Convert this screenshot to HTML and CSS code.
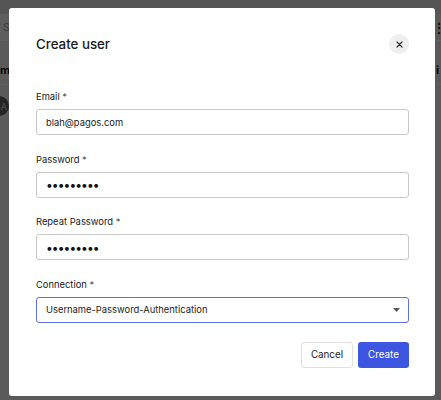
FILE: index.html
```html
<!DOCTYPE html>
<html lang="en">
<head>
<meta charset="utf-8">
<title>Create user</title>
<link rel="stylesheet" href="styles.css">
</head>
<body>
<div class="app">
  <div class="topbar"></div>
  <div class="toolbar">
    <div class="search">Search users</div>
    <div class="tool">⋮</div>
  </div>
  <div class="thead"><span class="th">m</span><span class="th-r">i</span></div>
  <div class="trow"><span class="avatar">SA</span></div>
</div>
<div class="overlay">
  <div class="modal" role="dialog" aria-labelledby="dlg-title">
    <div class="modal-head">
      <h2 id="dlg-title">Create user</h2>
      <button class="close" type="button" aria-label="Close">
        <svg width="7" height="7" viewBox="0 0 7 7"><path d="M1 1L6 6M6 1L1 6" stroke="#333" stroke-width="1.2" stroke-linecap="round"/></svg>
      </button>
    </div>
    <div class="fields">
      <div class="field">
        <div class="label">Email <span class="req">*</span></div>
        <div class="input">blah@pagos.com</div>
      </div>
      <div class="field">
        <div class="label">Password <span class="req">*</span></div>
        <div class="input"><span class="dots">•••••••••</span></div>
      </div>
      <div class="field">
        <div class="label">Repeat Password <span class="req">*</span></div>
        <div class="input"><span class="dots">•••••••••</span></div>
      </div>
      <div class="field">
        <div class="label">Connection <span class="req">*</span></div>
        <div class="input select">
          <span>Username-Password-Authentication</span>
          <svg class="caret" width="7" height="4" viewBox="0 0 7 4"><path d="M0 0H7L3.5 4Z" fill="#555"/></svg>
        </div>
      </div>
    </div>
    <div class="actions">
      <button class="btn cancel" type="button">Cancel</button>
      <button class="btn primary" type="button">Create</button>
    </div>
  </div>
</div>
</body>
</html>
```

FILE: styles.css
```css
* { box-sizing: border-box; }

html, body {
  margin: 0;
  height: 100%;
}

body {
  font-family: Inter, "Noto Sans", sans-serif;
  color: #1f1f1f;
  overflow: hidden;
}

.app {
  height: 400px;
  background: #e2e2e2;
  display: flex;
  flex-direction: column;
}

.topbar {
  height: 14px;
  background: #d4d4d4;
}

.toolbar {
  height: 27px;
  display: flex;
  justify-content: space-between;
  align-items: stretch;
  border-bottom: 1px solid #f2f2f2;
}

.search {
  width: 200px;
  padding-left: 3px;
  font-size: 11px;
  display: flex;
  align-items: center;
  color: #999;
  background: #e8e8e8;
}

.tool {
  width: 8px;
  font-size: 12px;
  font-weight: 700;
  color: #222;
  display: flex;
  align-items: center;
}

.thead {
  height: 44px;
  padding-top: 14px;
  display: flex;
  justify-content: space-between;
  align-items: center;
  border-bottom: 1px solid #ececec;
  font-size: 11px;
  font-weight: 700;
  color: #111;
}

.th-r {
  width: 5px;
}

.trow {
  height: 50px;
  display: flex;
  align-items: center;
  padding-bottom: 8px;
}

.avatar {
  width: 20px;
  height: 20px;
  margin-left: -11px;
  border-radius: 50%;
  background: #5a5a5a;
  color: #c8c8c8;
  font-size: 9px;
  display: flex;
  align-items: center;
  justify-content: flex-end;
  padding-right: 2px;
}

.overlay {
  position: fixed;
  inset: 0;
  background: rgba(0, 0, 0, 0.6);
  padding: 8px 6px 4px 9px;
  display: flex;
}

.modal {
  flex: 1;
  background: #fff;
  border-radius: 3px;
  padding: 26px 26px 0 27px;
  display: flex;
  flex-direction: column;
}

.modal-head {
  height: 20px;
  display: flex;
  justify-content: space-between;
  align-items: center;
}

.modal-head h2 {
  margin: 0;
  font-size: 13.3px;
  font-weight: 500;
  color: #1a1a1a;
}

.close {
  width: 20px;
  height: 20px;
  padding: 0;
  border: 0;
  border-radius: 50%;
  background: #efefef;
  display: flex;
  align-items: center;
  justify-content: center;
}

.close svg {
  display: block;
}

.fields {
  margin-top: 36px;
  display: flex;
  flex-direction: column;
  gap: 17.67px;
}

.label {
  font-size: 9.4px;
  line-height: 14px;
  color: #1a1a1a;
  margin-bottom: 5px;
}

.req {
  color: #555;
}

.input {
  height: 26px;
  border: 1px solid #c9c9c9;
  border-radius: 3px;
  padding: 0 9px;
  display: flex;
  align-items: center;
  font-size: 9.4px;
  color: #222;
}

.dots {
  font-size: 12px;
  letter-spacing: -0.9px;
  color: #111;
}

.select {
  border: 1.5px solid #5c70e8;
  justify-content: space-between;
  padding-right: 8px;
}

.caret {
  display: block;
}

.actions {
  margin-top: 19px;
  display: flex;
  justify-content: flex-end;
  gap: 5px;
}

.btn {
  height: 26px;
  border-radius: 3px;
  font-family: Inter, "Noto Sans", sans-serif;
  font-size: 9.8px;
  padding: 0;
}

.cancel {
  width: 52px;
  background: #fff;
  border: 1px solid #e0e0e0;
  color: #222;
}

.primary {
  width: 51px;
  background: #3d56e2;
  border: 0;
  color: #fff;
}
```
